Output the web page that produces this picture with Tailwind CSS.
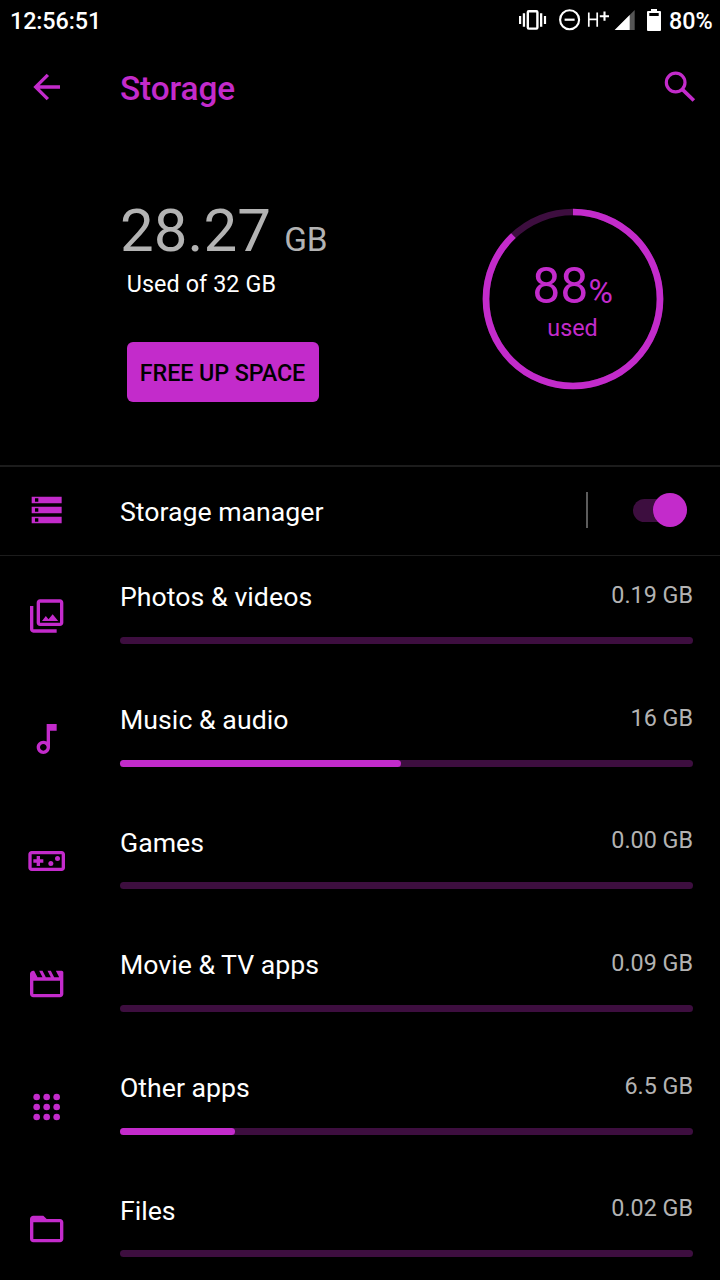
<!DOCTYPE html>
<html lang="en">
<head>
<meta charset="utf-8">
<title>Storage</title>
<script src="https://cdn.jsdelivr.net/npm/@tailwindcss/browser@4"></script>
</head>
<body class="bg-black">
<div class="flex h-[1280px] w-[720px] flex-col overflow-hidden bg-black font-['Roboto',sans-serif] text-[26.67px] text-white">

  <!-- Status bar -->
  <header class="flex h-10 shrink-0 items-center pl-[10px] text-[23.33px] leading-10 font-medium">
    <span class="pt-px tracking-[-0.1px]">12:56:51</span>
    <svg class="ml-auto h-10 w-[152px]" viewBox="513 0 152 40" fill="#fff">
      <path d="M519 16h2.200v8h-2.200zM522.800 13.200h2.300v13.600h-2.300zM540 13.200h2.300v13.600h-2.300zM543.900 16h2.200v8h-2.200z"/>
      <rect x="527.800" y="11.200" width="9.600" height="17.400" rx="1" fill="none" stroke="#fff" stroke-width="2.400"/>
      <circle cx="569.600" cy="19.700" r="9.500" fill="none" stroke="#fff" stroke-width="2.100"/>
      <path d="M564.600 18.600h10v2.200h-10z"/>
      <path d="M588.800 12.500v14.300M597.200 12.500v14.300M588.800 19.300h8.400" fill="none" stroke="#fff" stroke-width="1.700"/>
      <path d="M599.800 16.200h9.200M604.500 11.600v9.200" fill="none" stroke="#fff" stroke-width="2.100"/>
      <path d="M634.700 10v20h-20z" fill="#555"/>
      <path d="M629.700 15v15h-15z"/>
      <path fill-rule="evenodd" d="M651 9h6v2h3q1 0 1 1v18q0 1-1 1h-12q-1 0-1-1V12q0-1 1-1h3zM649.300 13v3h9.400v-3z"/>
    </svg>
    <span class="ml-[4px] w-[51px] pt-px">80%</span>
  </header>

  <!-- App bar -->
  <div class="flex h-[94px] shrink-0 items-center text-[#c32bcb]">
    <svg class="ml-[27px] size-10" viewBox="0.200 0 24 24" fill="currentColor"><path d="M20 11H7.830l5.590-5.590L12 4l-8 8 8 8 1.410-1.410L7.830 13H20z"/></svg>
    <h1 class="ml-[53px] pt-[3px] text-[33.33px] leading-10 font-medium tracking-[-0.1px]">Storage</h1>
    <svg class="mr-[20px] ml-auto size-10" viewBox="0 0 24 24" fill="none" stroke="currentColor"><circle cx="9.400" cy="9.300" r="5.600" stroke-width="1.900"/><path d="M13.400 13.400l6.900 6.700" stroke-width="2.200" /></svg>
  </div>

  <!-- Usage summary -->
  <section class="flex h-[331px] shrink-0 items-start justify-between pr-[56px] pl-[120px]">
    <div class="pt-[62px]">
      <p class="leading-[70px] whitespace-nowrap text-[#b3b3b3]"><span class="text-[60px] tracking-[0.05px]">28.27</span><span class="ml-[13.200px] text-[33.33px]">GB</span></p>
      <p class="ml-[6.67px] -mt-[9px] text-[23.33px] leading-8 tracking-[0.1px]">Used of 32 GB</p>
      <button class="mt-[42px] ml-[7px] block h-[60px] w-[192px] rounded-[6px] bg-[#c32bcb] pt-[2px] pr-px text-center text-[23.33px] font-medium tracking-[-0.1px] whitespace-nowrap text-black">FREE UP SPACE</button>
    </div>
    <div class="mt-[74px] grid size-[182px] text-center text-[#c32bcb]">
      <svg class="col-start-1 row-start-1 size-[182px] -rotate-90" viewBox="0 0 182 182" fill="none" stroke-width="6.670">
        <circle cx="91" cy="91" r="87" stroke="#3d0e3f"/>
        <circle cx="91" cy="91" r="87" stroke="#c32bcb" pathLength="100" stroke-dasharray="88 12"/>
      </svg>
      <div class="col-start-1 row-start-1 pt-[48px] pr-px">
        <p class="text-[50px] leading-[60px]">88<span class="text-[33.33px]">%</span></p>
        <p class="-mt-[10px] text-[23.33px] leading-8">used</p>
      </div>
    </div>
  </section>

  <!-- Storage manager -->
  <section class="flex h-[91px] shrink-0 items-center border-t-2 border-b border-[#1c1c1c] pr-[33px] pb-[2px]">
    <svg class="ml-[27px] size-10" viewBox="0.200 0 24 24" fill="#c32bcb"><path d="M3 20h18v-4H3v4zm2-3h2v2H5v-2zM3 4v4h18V4H3zm4 3H5V5h2v2zm-4 7h18v-4H3v4zm2-3h2v2H5v-2z"/></svg>
    <span class="ml-[53px] pt-[4px]">Storage manager</span>
    <span class="ml-auto h-9 w-[2px] bg-[#5c5c5c]"></span>
    <span class="ml-[45px] flex h-[23px] w-[54px] items-center justify-end rounded-full bg-[#3d0e3f]"><span class="size-[34px] shrink-0 rounded-full bg-[#c32bcb]"></span></span>
  </section>

  <!-- Categories -->
  <ul class="text-[#c32bcb]">
    <li class="flex h-[122.67px] pr-[27px]">
      <svg class="mt-[40px] mr-[53px] ml-[27px] size-10 shrink-0" viewBox="0.200 0 24 24" fill="currentColor"><path d="M20 4v12H8V4h12m0-2H8c-1.100 0-2 .9-2 2v12c0 1.100.9 2 2 2h12c1.100 0 2-.9 2-2V4c0-1.100-.9-2-2-2zM9.200 15l2.300-3 1.600 1.900L15.600 11l3.300 4zM2 6v14c0 1.100.9 2 2 2h14v-2H4V6H2z"/></svg>
      <div class="grow pt-[23px]"><div class="flex justify-between leading-8"><span class="pt-[2.400px] text-white tracking-[0.05px]">Photos &amp; videos</span><span class="text-[23.33px] text-[#b3b3b3]">0.19 GB</span></div><div class="mt-[23.600px] h-[7px] rounded-full bg-[#3d0e3f]"></div></div>
    </li>
    <li class="flex h-[122.67px] pr-[27px]">
      <svg class="mt-[40px] mr-[53px] ml-[27px] size-10 shrink-0" viewBox="0.200 0 24 24" fill="currentColor"><path d="M12 3v10.550c-.59-.34-1.270-.55-2-.55-2.210 0-4 1.790-4 4s1.790 4 4 4 4-1.790 4-4V7h4V3h-6zm-2 16c-1.100 0-2-.9-2-2s.9-2 2-2 2 .9 2 2-.9 2-2 2z"/></svg>
      <div class="grow pt-[23px]"><div class="flex justify-between leading-8"><span class="pt-[2.500px] text-white tracking-[0.05px]">Music &amp; audio</span><span class="text-[23.33px] text-[#b3b3b3]">16 GB</span></div><div class="mt-[23.500px] h-[7px] rounded-full bg-[#3d0e3f]"><div class="h-full rounded-full bg-[#c32bcb]" style="width:49.1%"></div></div></div>
    </li>
    <li class="flex h-[122.67px] pr-[27px]">
      <svg class="mt-[40px] mr-[53px] ml-[27px] size-10 shrink-0" viewBox="0.200 0 24 24" fill="currentColor"><path d="M21 6H3c-1.100 0-2 .9-2 2v8c0 1.100.9 2 2 2h18c1.100 0 2-.9 2-2V8c0-1.100-.9-2-2-2zm0 10H3V8h18v8zM6 15h2v-2h2v-2H8V9H6v2H4v2h2z"/><circle cx="14.500" cy="13.500" r="1.500"/><circle cx="18.500" cy="10.500" r="1.500"/></svg>
      <div class="grow pt-[23px]"><div class="flex justify-between leading-8"><span class="pt-[2.500px] text-white">Games</span><span class="text-[23.33px] text-[#b3b3b3]">0.00 GB</span></div><div class="mt-[23.500px] h-[7px] rounded-full bg-[#3d0e3f]"></div></div>
    </li>
    <li class="flex h-[122.67px] pr-[27px]">
      <svg class="mt-[40px] mr-[53px] ml-[27px] size-10 shrink-0" viewBox="0.200 0 24 24" fill="currentColor"><path fill-rule="evenodd" d="M4.500 4l2 4h3L7.500 4h2l2 4h3l-2-4h2l2 4h3l-2-4h3.500c.55 0 1 .45 1 1v13c0 1.100-.9 2-2 2H4c-1.100 0-2-.9-2-2V6c0-1.100.9-2 2-2zM4 10v8h16v-8z"/></svg>
      <div class="grow pt-[23px]"><div class="flex justify-between leading-8"><span class="pt-[2.500px] text-white">Movie &amp; TV apps</span><span class="text-[23.33px] text-[#b3b3b3]">0.09 GB</span></div><div class="mt-[23.500px] h-[7px] rounded-full bg-[#3d0e3f]"></div></div>
    </li>
    <li class="flex h-[122.67px] pr-[27px]">
      <svg class="mt-[40px] mr-[53px] ml-[27px] size-10 shrink-0" viewBox="0.200 0 24 24" fill="currentColor"><circle cx="6" cy="6" r="2"/><circle cx="12" cy="6" r="2"/><circle cx="18" cy="6" r="2"/><circle cx="6" cy="12" r="2"/><circle cx="12" cy="12" r="2"/><circle cx="18" cy="12" r="2"/><circle cx="6" cy="18" r="2"/><circle cx="12" cy="18" r="2"/><circle cx="18" cy="18" r="2"/></svg>
      <div class="grow pt-[23px]"><div class="flex justify-between leading-8"><span class="pt-[2.500px] text-white">Other apps</span><span class="text-[23.33px] text-[#b3b3b3]">6.5 GB</span></div><div class="mt-[23.500px] h-[7px] rounded-full bg-[#3d0e3f]"><div class="h-full rounded-full bg-[#c32bcb]" style="width:20.1%"></div></div></div>
    </li>
    <li class="flex h-[110px] pr-[27px]">
      <svg class="mt-[40px] mr-[53px] ml-[27px] size-10 shrink-0" viewBox="0.200 0 24 24" fill="currentColor"><path d="M20 6h-8l-2-2H4c-1.100 0-1.990.9-1.990 2L2 18c0 1.100.9 2 2 2h16c1.100 0 2-.9 2-2V8c0-1.100-.9-2-2-2zm0 12H4V8h16v10z"/></svg>
      <div class="grow pt-[23px]"><div class="flex justify-between leading-8"><span class="pt-[2.500px] text-white">Files</span><span class="text-[23.33px] text-[#b3b3b3]">0.02 GB</span></div><div class="mt-[23.500px] h-[7px] rounded-full bg-[#3d0e3f]"></div></div>
    </li>
  </ul>
</div>
</body>
</html>
